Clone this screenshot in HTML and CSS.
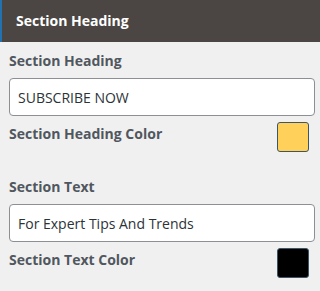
FILE: index.html
```html
<!DOCTYPE html>
<html lang="en">
<head>
  <meta charset="UTF-8">
  <meta name="viewport" content="width=device-width, initial-scale=1.0">
  <title>Section Heading</title>
  <link rel="stylesheet" href="styles.css">
</head>
<body>
  <div class="panel-title">Section Heading</div>
  <div class="panel-body">
    <div class="control">
      <label class="control-label">Section Heading</label>
      <input class="text-field" type="text" value="SUBSCRIBE NOW">
    </div>
    <div class="color-row">
      <span class="control-label">Section Heading Color</span>
      <span class="swatch swatch-yellow"></span>
    </div>

    <div class="control spaced">
      <label class="control-label">Section Text</label>
      <input class="text-field" type="text" value="For Expert Tips And Trends">
    </div>
    <div class="color-row">
      <span class="control-label">Section Text Color</span>
      <span class="swatch swatch-black"></span>
    </div>
  </div>
</body>
</html>
```

FILE: styles.css
```css
html {
    overflow: hidden;
  }
  body {
    margin: 0;
    background-color: #f0f0f1;
    font-family: "Open Sans", "Noto Sans", sans-serif;
    font-size: 14px;
  }

  .panel-title {
    height: 42px;
    line-height: 42px;
    padding-left: 14px;
    border-left: 2px solid #2271b1;
    background-color: #4b4643;
    color: #fff;
    font-weight: 700;
    font-size: 14px;
  }

  .panel-body {
    padding: 9px 5px 0 9px;
  }

  .control {
    display: flex;
    flex-direction: column;
  }

  .control.spaced {
    margin-top: 25px;
  }

  .control-label {
    display: block;
    line-height: 20px;
    color: #50575e;
    font-weight: 700;
    margin-bottom: 7px;
  }

  .text-field {
    box-sizing: border-box;
    height: 38px;
    padding: 0 8px;
    border: 1px solid #8c8f94;
    border-radius: 4px;
    background: #fff;
    color: #2c3338;
    font-family: inherit;
    font-size: 14px;
  }

  .color-row {
    display: flex;
    justify-content: space-between;
    align-items: flex-start;
    margin-top: 6px;
    padding-right: 6px;
  }

  .color-row .control-label {
    margin-top: 2px;
    margin-bottom: 0;
  }

  .swatch {
    box-sizing: border-box;
    width: 32px;
    height: 30px;
    border: 1px solid #3d5566;
    border-radius: 3px;
  }

  .swatch-yellow {
    background-color: #ffd15b;
  }

  .swatch-black {
    background-color: #000;
  }
```
